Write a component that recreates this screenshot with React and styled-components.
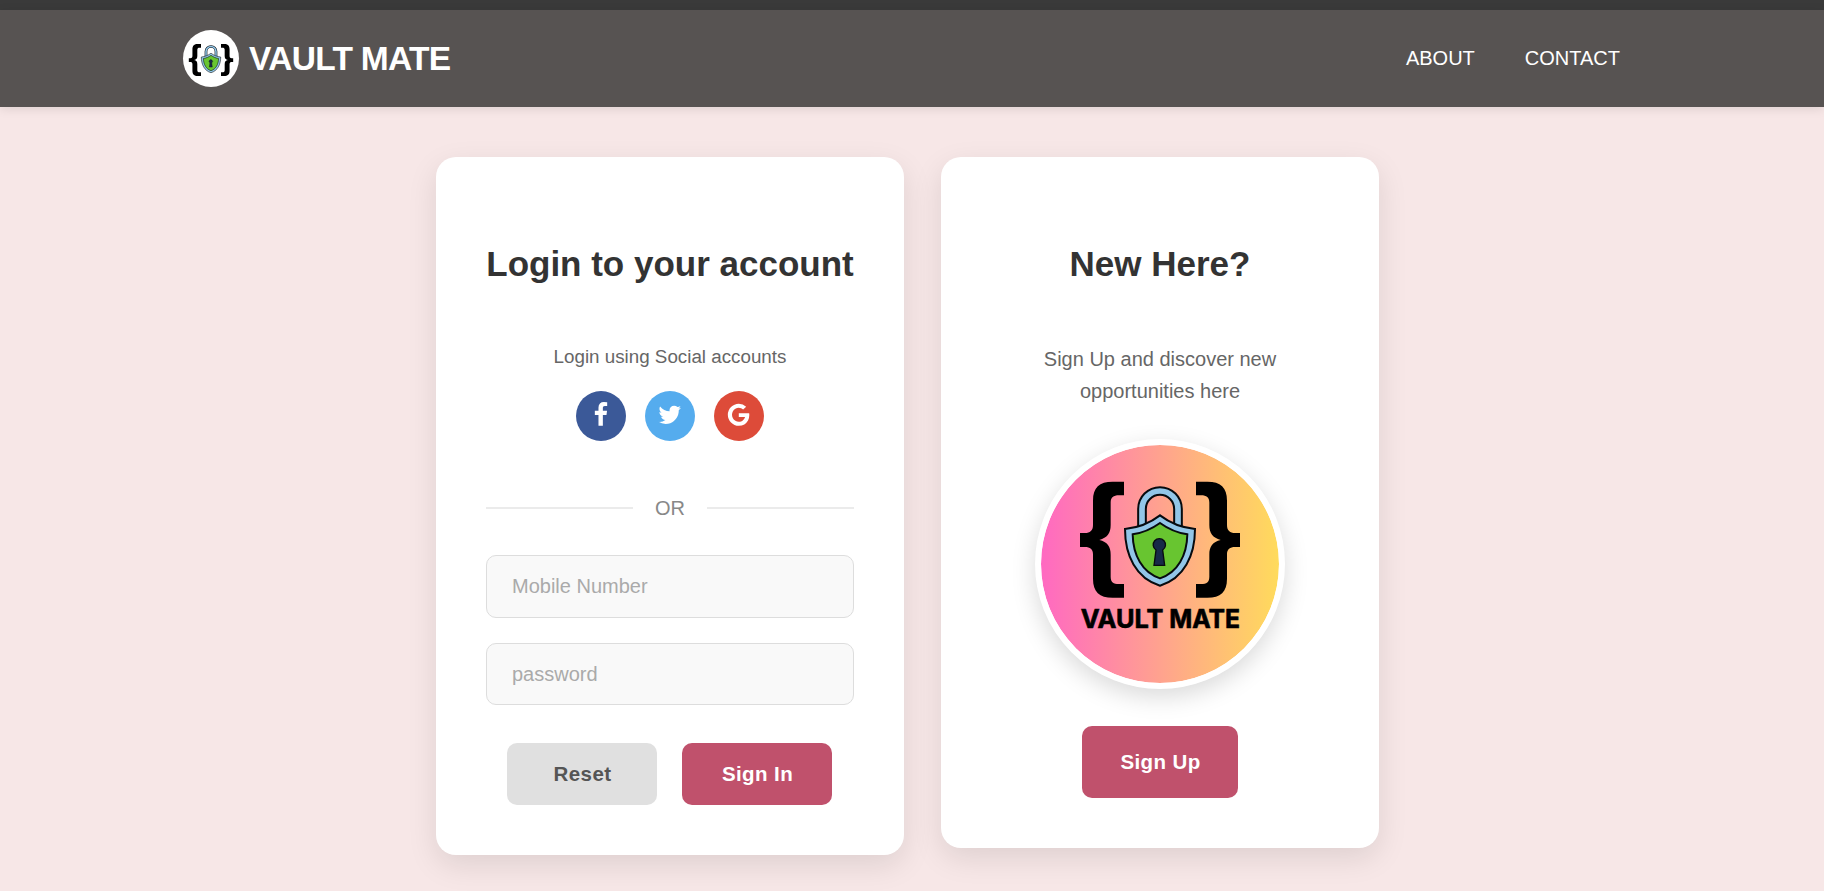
import React from "react";
import styled, { createGlobalStyle } from "styled-components";

const GlobalStyle = createGlobalStyle`
  *, *::before, *::after { box-sizing: border-box; }
  body {
    margin: 0;
    background: #f7e7e7;
    font-family: "Liberation Sans", Arial, sans-serif;
    font-size: 20px;
  }
  h1, h2, p { margin: 0; }
`;

const Page = styled.div`
  height: 891px;
  overflow: hidden;
`;

const TopStrip = styled.div`
  height: 10px;
  background: #3a3a3a;
`;

const Header = styled.header`
  display: flex;
  align-items: center;
  justify-content: space-between;
  height: 97px;
  padding: 0 204px 0 183px;
  background: #575352;
  box-shadow: 0 2px 10px rgba(0, 0, 0, 0.1);
`;

const Brand = styled.div`
  display: flex;
  align-items: center;
  gap: 10px;
`;

const BrandBadge = styled.div`
  width: 56px;
  height: 57px;
  border-radius: 50%;
  background: #fff;
  overflow: hidden;
  svg { display: block; width: 100%; height: 100%; }
`;

const BrandName = styled.h1`
  color: #fff;
  font-size: 33.5px;
  line-height: 40px;
  font-weight: 700;
  letter-spacing: -0.7px;
`;

const Nav = styled.nav`
  display: flex;
  gap: 50px;
  padding-bottom: 2px;
`;

const NavLink = styled.a`
  color: #fff;
  font-size: 20px;
  line-height: 24px;
  text-decoration: none;
`;

const Main = styled.main`
  display: flex;
  align-items: flex-start;
  gap: 37px;
  padding: 50px 0 0 436px;
`;

const Card = styled.section`
  display: flex;
  flex-direction: column;
  align-items: center;
  flex: none;
  width: ${(p) => p.$width}px;
  height: ${(p) => p.$height}px;
  padding: 87px 50px 0;
  border-radius: 20px;
  background: #fff;
  box-shadow: 0 10px 30px rgba(0, 0, 0, 0.1);
`;

const CardTitle = styled.h2`
  color: #333;
  font-size: 35px;
  line-height: 40px;
  white-space: nowrap;
`;

const SocialHint = styled.p`
  margin-top: 61px;
  color: #666;
  font-size: 18.8px;
  line-height: 24px;
`;

const SocialRow = styled.div`
  display: flex;
  gap: 19px;
  margin-top: 22px;
`;

const SocialButton = styled.a`
  display: flex;
  align-items: center;
  justify-content: center;
  width: 50px;
  height: 50px;
  padding-bottom: 2px;
  border-radius: 50%;
  background: ${(p) => p.$color};
  svg { width: 25.6px; height: 25.6px; fill: #fff; }
`;

const Divider = styled.div`
  display: flex;
  align-items: center;
  align-self: stretch;
  gap: 22px;
  height: 24px;
  margin-top: 55px;
  color: #888;
  &::before, &::after {
    content: "";
    flex: 1;
    height: 2px;
    background: #ebebeb;
  }
`;

const Field = styled.input`
  width: 100%;
  height: ${(p) => p.$height}px;
  margin-top: ${(p) => p.$gap}px;
  padding: 0 25px;
  border: 1px solid #ddd;
  border-radius: 10px;
  background: #f9f9f9;
  font: 20px "Liberation Sans", Arial, sans-serif;
  &::placeholder { color: #aaa; opacity: 1; }
`;

const ButtonRow = styled.div`
  display: flex;
  gap: 25px;
  margin: 38px 0 0 -1px;
`;

const Button = styled.button`
  width: ${(p) => p.$width || 150}px;
  height: ${(p) => p.$height || 62}px;
  padding: 0 0 0 1px;
  border: 0;
  border-radius: 10px;
  background: ${(p) => (p.$muted ? "#e0e0e0" : "#c0516c")};
  color: ${(p) => (p.$muted ? "#555" : "#fff")};
  font: 700 20.5px "Liberation Sans", Arial, sans-serif;
  letter-spacing: 0.4px;
`;

const Pitch = styled.p`
  margin: 59px 0 32px;
  color: #666;
  line-height: 32px;
  text-align: center;
`;

const LogoDisc = styled.div`
  width: 250px;
  height: 250px;
  margin-bottom: 37px;
  border: 6px solid #fff;
  border-radius: 50%;
  background: #fff linear-gradient(90deg, #ff66c4, #ffde59) border-box;
  background-clip: padding-box;
  box-shadow: 0 8px 25px rgba(0, 0, 0, 0.15);
  svg { display: block; width: 100%; height: 100%; }
`;

const LogoWord = styled.text`
  font: 700 78px Inter, sans-serif;
  stroke: #000;
  stroke-width: 2px;
`;

const BRACE =
  "M312 155H278C238 155 219 172 219 212V285C219 302 210 309 195 309H180V351H195C210 351 219 358 219 373V446C219 486 238 503 278 503H312V462H297C280 462 272 456 272 440V374C272 349 262 336 238 330C262 323 272 310 272 285V218C272 203 280 196 297 196H312Z";

function VaultMark() {
  return (
    <g>
      <path d={BRACE} />
      <path d={BRACE} transform="translate(840 0) scale(-1 1)" />
      <path d="M366 300V237A54 54 0 0 1 474 237V300" fill="none" stroke="#070b0f" strokeWidth="29" />
      <path d="M366 300V237A54 54 0 0 1 474 237V300" fill="none" stroke="#92c6e8" strokeWidth="17" />
      <path
        d="M420 256C450 279 488 293 525 297C525 376 492 446 420 467C348 446 315 376 315 297C352 293 390 279 420 256Z"
        fill="#92c6e8"
        stroke="#070b0f"
        strokeWidth="6"
      />
      <path
        d="M420 279C445 297 473 309 502 313C501 376 473 428 420 445C367 428 339 376 338 313C367 309 395 297 420 279Z"
        fill="#68c530"
        stroke="#070b0f"
        strokeWidth="6"
      />
      <path
        d="M408 360A18.5 18.5 0 1 1 428 360L434 406H402Z"
        fill="#172a48"
        stroke="#070b0f"
        strokeWidth="4"
      />
    </g>
  );
}

const ICONS = {
  facebook:
    "M1343 12v264h-157q-86 0-116 36t-30 108v189h293l-39 296h-254v759h-306v-759h-255v-296h255v-218q0-186 104-288.500t277-102.500q147 0 228 12z",
  twitter:
    "M1684 408q-67 98-162 167 1 14 1 42 0 130-38 259.500t-115.500 248.500-184.500 210.500-258 146-323 54.500q-271 0-496-145 35 4 78 4 225 0 401-138-105-2-188-64.500t-114-159.500q33 5 61 5 43 0 85-11-112-23-185.500-111.500t-73.500-205.500v-4q68 38 146 41-66-44-105-115t-39-154q0-88 44-163 121 149 294.500 238.500t371.500 99.500q-8-38-8-74 0-134 94.500-228.500t228.500-94.500q140 0 236 102 109-21 205-78-37 115-142 178 93-10 186-50z",
  google:
    "M896 786h725q12 67 12 128 0 217-91 387.500t-259.500 266.500-386.500 96q-157 0-299-60.500t-245-163.500-163.500-245-60.500-299 60.500-299 163.500-245 245-163.500 299-60.500q300 0 515 201l-209 201q-123-119-306-119-129 0-238.500 65t-173.500 176.500-64 243.500 64 243.500 173.500 176.500 238.500 65q87 0 160-24t120-60 82-82 51.500-87 22.500-78h-436v-264z",
};

const SOCIALS = [
  { name: "facebook", color: "#3b5998" },
  { name: "twitter", color: "#55acee" },
  { name: "google", color: "#dd4b39" },
];

export default function App() {
  return (
    <Page>
      <GlobalStyle />
      <TopStrip />
      <Header>
        <Brand>
          <BrandBadge>
            <svg viewBox="117 10 606 606">
              <VaultMark />
            </svg>
          </BrandBadge>
          <BrandName>VAULT MATE</BrandName>
        </Brand>
        <Nav>
          <NavLink>ABOUT</NavLink>
          <NavLink>CONTACT</NavLink>
        </Nav>
      </Header>
      <Main>
        <Card $width={468} $height={698}>
          <CardTitle>Login to your account</CardTitle>
          <SocialHint>Login using Social accounts</SocialHint>
          <SocialRow>
            {SOCIALS.map((s) => (
              <SocialButton key={s.name} $color={s.color} aria-label={s.name}>
                <svg viewBox="0 0 1792 1792">
                  <path d={ICONS[s.name]} />
                </svg>
              </SocialButton>
            ))}
          </SocialRow>
          <Divider>OR</Divider>
          <Field type="text" placeholder="Mobile Number" $height={63} $gap={35} />
          <Field type="password" placeholder="password" $height={62} $gap={25} />
          <ButtonRow>
            <Button type="reset" $muted>Reset</Button>
            <Button type="submit">Sign In</Button>
          </ButtonRow>
        </Card>
        <Card $width={438} $height={691}>
          <CardTitle>New Here?</CardTitle>
          <Pitch>
            Sign Up and discover new
            <br />
            opportunities here
          </Pitch>
          <LogoDisc>
            <svg viewBox="63 45 714 714">
              <VaultMark />
              <LogoWord x="182" y="593" textLength="248" lengthAdjust="spacingAndGlyphs">
                VAULT
              </LogoWord>
              <LogoWord x="448" y="593" textLength="212" lengthAdjust="spacingAndGlyphs">
                MATE
              </LogoWord>
            </svg>
          </LogoDisc>
          <Button $width={156} $height={72}>Sign Up</Button>
        </Card>
      </Main>
    </Page>
  );
}
